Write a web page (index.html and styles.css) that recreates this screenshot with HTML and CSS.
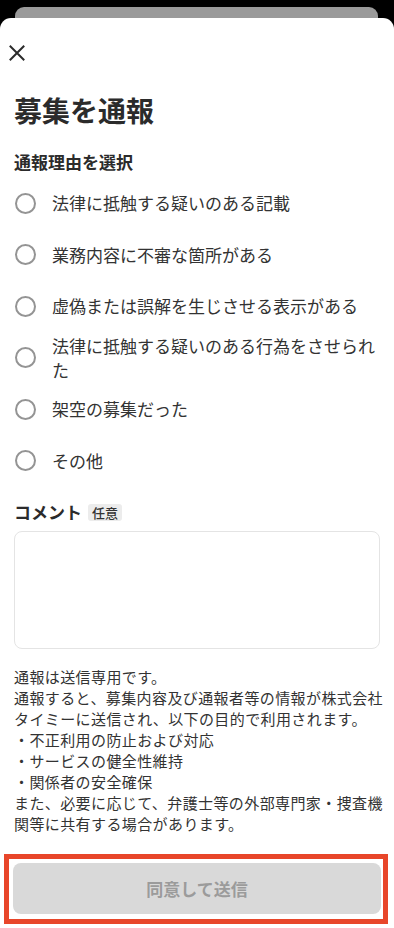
FILE: index.html
```html
<!DOCTYPE html>
<html lang="ja">
<head>
<meta charset="utf-8">
<title>募集を通報</title>
<link rel="stylesheet" href="styles.css">
</head>
<body>
<div class="backcard"></div>
<div class="sheet">
  <button class="close" aria-label="閉じる">
    <svg width="16" height="16" viewBox="0 0 16 16"><path d="M1.5 1.5L14.5 14.5M14.5 1.5L1.5 14.5" stroke="#2b2b2b" stroke-width="2" stroke-linecap="square" fill="none"/></svg>
  </button>
  <h1 class="title">募集を通報</h1>
  <h2 class="subtitle">通報理由を選択</h2>
  <ul class="reasons">
    <li class="reason"><span class="radio"></span><span class="label">法律に抵触する疑いのある記載</span></li>
    <li class="reason"><span class="radio"></span><span class="label">業務内容に不審な箇所がある</span></li>
    <li class="reason"><span class="radio"></span><span class="label">虚偽または誤解を生じさせる表示がある</span></li>
    <li class="reason"><span class="radio"></span><span class="label">法律に抵触する疑いのある行為をさせられた</span></li>
    <li class="reason"><span class="radio"></span><span class="label">架空の募集だった</span></li>
    <li class="reason"><span class="radio"></span><span class="label">その他</span></li>
  </ul>
  <div class="comment-head"><span class="comment-title">コメント</span><span class="badge">任意</span></div>
  <textarea class="comment-box"></textarea>
  <p class="note">通報は送信専用です。<br>通報すると、募集内容及び通報者等の情報が株式会社<br>タイミーに送信され、以下の目的で利用されます。<br>・不正利用の防止および対応<br>・サービスの健全性維持<br>・関係者の安全確保<br>また、必要に応じて、弁護士等の外部専門家・捜査機<br>関等に共有する場合があります。</p>
  <div class="footer-frame"><button class="submit" disabled>同意して送信</button></div>
</div>
</body>
</html>
```
FILE: styles.css
```css
* { box-sizing: border-box; }
html, body { margin: 0; padding: 0; }
body {
  background: #000;
  width: 394px;
  padding-top: 7px;
  font-family: "Noto Sans CJK JP", "Noto Sans", sans-serif;
  color: #333;
}
.backcard {
  margin: 0 16px 0 15px;
  height: 11px;
  background: #9a9a9a;
  border-radius: 9px 9px 0 0;
}
.sheet {
  background: #fff;
  border-radius: 11px 11px 0 0;
  padding: 0 14px;
  min-height: 910px;
  display: flex;
  flex-direction: column;
}
.close {
  margin: 27px 0 0 -5px;
  padding: 0;
  border: 0;
  background: none;
  width: 16px;
  height: 16px;
  display: block;
}
.close svg { display: block; }
.title {
  margin: 29px 0 0;
  font-size: 28px;
  line-height: 40px;
  font-weight: 700;
  color: #2b2b2b;
}
.subtitle {
  margin: 19.5px 0 0;
  font-size: 17px;
  line-height: 24px;
  font-weight: 700;
  color: #2b2b2b;
}
.reasons {
  list-style: none;
  margin: 3.75px 0 0;
  padding: 0;
}
.reason {
  height: 51.5px;
  display: flex;
  align-items: center;
  gap: 16px;
  padding-left: 1px;
}
.radio {
  flex: none;
  width: 21px;
  height: 21px;
  border: 2px solid #949494;
  border-radius: 50%;
}
.label {
  font-size: 17px;
  line-height: 24px;
  color: #333;
}
.comment-head {
  margin-top: 13.75px;
  height: 24px;
  display: flex;
  align-items: center;
  gap: 6px;
}
.comment-title {
  font-size: 17px;
  line-height: 24px;
  font-weight: 700;
  color: #2b2b2b;
}
.badge {
  background: #ececec;
  border-radius: 3px;
  font-size: 13px;
  line-height: 17px;
  padding: 0 4px;
  color: #333;
  font-weight: 500;
}
.comment-box {
  display: block;
  margin-top: 6.5px;
  width: 366px;
  height: 118.5px;
  border: 1px solid #e4e4e4;
  border-radius: 8px;
  resize: none;
  background: #fff;
}
.note {
  margin: 16.5px 0 0;
  font-size: 15px;
  letter-spacing: 0.4px;
  line-height: 21px;
  color: #333;
  white-space: nowrap;
}
.footer-frame {
  margin: 20.5px 0 0 -10px;
  width: 384px;
  border: 5px solid #e8462a;
  padding: 4px 2px 4.5px 4px;
}
.submit {
  display: block;
  width: 368px;
  height: 51px;
  border: 0;
  border-radius: 8px;
  background: #d9d9d9;
  color: #9b9b9b;
  font-family: inherit;
  font-size: 17px;
  font-weight: 700;
}
```
